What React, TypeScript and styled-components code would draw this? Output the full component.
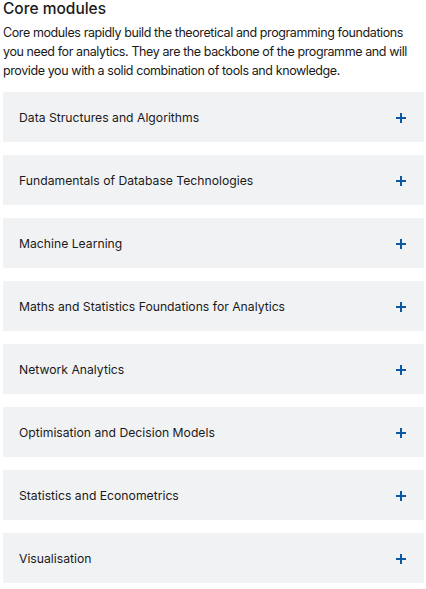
import { FC } from "react";
import styled, { createGlobalStyle } from "styled-components";

const modules = [
  "Data Structures and Algorithms",
  "Fundamentals of Database Technologies",
  "Machine Learning",
  "Maths and Statistics Foundations for Analytics",
  "Network Analytics",
  "Optimisation and Decision Models",
  "Statistics and Econometrics",
  "Visualisation",
];

const GlobalStyle = createGlobalStyle`
  body {
    margin: 0;
    background: #fff;
    font-family: Inter, "Noto Sans", sans-serif;
    color: #1a1a1a;
  }
`;

const PlusIcon: FC = () => (
  <svg width="10" height="10" viewBox="0 0 10 10" aria-hidden>
    <path d="M5 0v10M0 5h10" stroke="#0b58a4" strokeWidth="2" />
  </svg>
);

export default function App() {
  return (
    <>
      <GlobalStyle />
      <Section>
        <H2>Core modules</H2>
        <Intro>
          Core modules rapidly build the theoretical and programming
          foundations you need for analytics. They are the backbone of the
          programme and will provide you with a solid combination of tools and
          knowledge.
        </Intro>
        <List>
          {modules.map((name) => (
            <Item key={name}>
              <ItemTitle>{name}</ItemTitle>
              <PlusIcon />
            </Item>
          ))}
        </List>
      </Section>
    </>
  );
}

const Section = styled.section`
  padding: 0 2px 0 3px;
`;

const H2 = styled.h2`
  margin: 0;
  font-size: 15.5px;
  font-weight: 450;
  line-height: 17px;
`;

const Intro = styled.p`
  margin: 6px 0 12px;
  font-size: 12.5px;
  letter-spacing: -0.4px;
  line-height: 19px;
`;

const List = styled.div`
  display: grid;
  grid-gap: 13px;
`;

const Item = styled.div`
  display: flex;
  align-items: center;
  justify-content: space-between;
  height: 50px;
  padding: 1px 18px 0 16px;
  box-sizing: border-box;
  background: #f1f2f4;
`;

const ItemTitle = styled.span`
  font-size: 12.2px;
  line-height: 16px;
`;
